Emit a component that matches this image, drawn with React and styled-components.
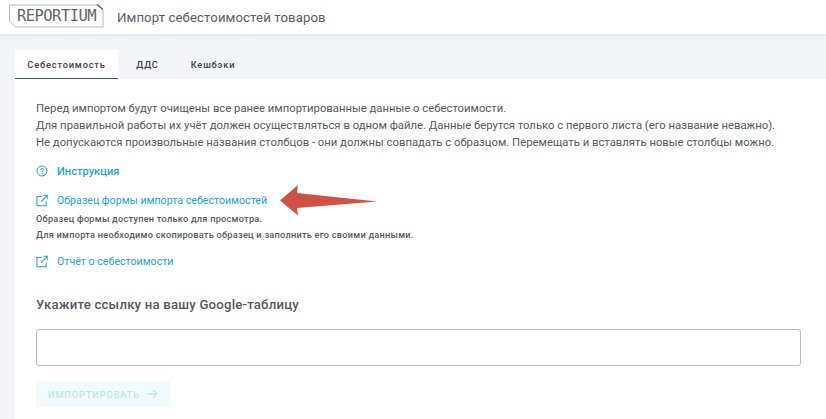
import React from "react";
import styled, { createGlobalStyle } from "styled-components";

const Global = createGlobalStyle`
  html, body { margin: 0; padding: 0; background: #f4f5f9; }
  body { font-family: Roboto, "Liberation Sans", sans-serif; }
  #root { width: 826px; height: 419px; overflow: hidden; }
`;
const Page = styled.div`width: 826px; height: 419px; display: flex; flex-direction: column; overflow: hidden; position: relative;`;
const Header = styled.header`
  height: 34px; flex: none; background: #fff; display: flex; align-items: center; gap: 15px; padding: 0 0 0 9px;
  box-shadow: 0 1px 4px rgba(60,60,80,.12); position: relative; z-index: 1;
`;
const Logo = styled.div`
  position: relative; width: 93px; height: 26px; box-sizing: border-box; display: flex; align-items: center; justify-content: center;
`;
const LogoFrame = styled.svg`position: absolute; left: 0; top: 0; overflow: visible;`;
const LogoText = styled.span`
  font-family: "DejaVu Sans Mono", "Liberation Mono", monospace; font-size: 15.5px; color: #62676c; letter-spacing: -0.55px; position: relative; line-height: 1; top: 0px; left: 1px;
`;
const Title = styled.div`font-size: 13.2px; color: #5a5f66; letter-spacing: .1px;`;
const Body = styled.main`flex: 1; padding: 16px 0 0 15px; display: flex; flex-direction: column;`;
const Tabs = styled.nav`display: flex; height: 29px; flex: none;`;
const Tab = styled.div`
  width: ${p => p.$w}px; box-sizing: border-box; display: flex; align-items: center; justify-content: center;
  font-size: 9.3px; font-weight: 500; letter-spacing: .8px; color: #3d4248;
  background: ${p => p.$active ? "#fff" : "transparent"};
  border-bottom: ${p => p.$active ? "1px solid #33507a" : "none"};
`;
const Card = styled.section`flex: 1; background: #fff; padding: 21px 0 0 21px; position: relative;`;
const Intro = styled.p`margin: 0; font-size: 11.3px; line-height: 17px; color: #555a60; white-space: nowrap;`;
const LinkRow = styled.div`
  display: flex; align-items: center; gap: 9px; height: 16px; margin-top: ${p => p.$mt}px;
  color: #1ba8c9; font-size: ${p => p.$bold ? 11.1 : 10.65}px; font-weight: ${p => p.$bold ? 500 : 400};
`;
const IconBox = styled.span`width: 12px; height: 14px; display: inline-flex; align-items: center; justify-content: center; flex: none;`;
const Note = styled.p`margin: 3px 0 0; font-size: 9.2px; line-height: 16px; font-weight: 500; color: #555a60; letter-spacing: .25px; white-space: nowrap;`;
const Label = styled.h2`margin: 28px 0 0; font-size: 13.2px; line-height: 16px; font-weight: 500; color: #55595f; letter-spacing: .2px;`;
const Input = styled.input`
  display: block; box-sizing: border-box; width: 765px; height: 37px; margin-top: 16px; border: 1px solid #b9bbbf; border-radius: 3px; background: #fff; outline: none;
`;
const Button = styled.button`
  display: flex; align-items: center; justify-content: center; gap: 7px; width: 134px; height: 26px; margin-top: 15px; border: none; padding: 0; border-radius: 2px;
  background: #f1fafc; color: #bce4ef; font-family: inherit; font-size: 9.2px; font-weight: 500; letter-spacing: .9px;
`;
const Arrow = styled.svg`position: absolute; left: 280px; top: 185px; z-index: 2;`;

const External = () => (
  <svg width="13" height="13" viewBox="0 0 13 13" fill="none" stroke="#1ba8c9" strokeWidth="1.1">
    <path d="M6 2.2H1v10h10V7.2" />
    <path d="M5.5 7.7 12 1.2M8 .9h4.2v4.2" />
  </svg>
);
const Help = () => (
  <svg width="12" height="12" viewBox="0 0 12 12" fill="none" stroke="#1ba8c9" strokeWidth="1">
    <circle cx="6" cy="6" r="5" />
    <path d="M4.6 4.8c0-.9.6-1.4 1.4-1.4s1.4.5 1.4 1.3c0 1-1.4 1.1-1.4 2.2" />
    <path d="M6 8.1v.9" />
  </svg>
);

export default function App() {
  return (
    <Page>
      <Global />
      <Header>
        <Logo>
          <LogoFrame width="95" height="26" viewBox="0 0 95 26" fill="none" stroke="#b9bcc0" strokeWidth="1">
            <path d="M88 1H.5V17L6.5 23H94V6" />
            <path d="M88 .5 94 5.5" stroke="#555a60" strokeWidth="1.4" />
          </LogoFrame>
          <LogoText>REPORTIUM</LogoText>
        </Logo>
        <Title>Импорт себестоимостей товаров</Title>
      </Header>
      <Body>
        <Tabs>
          <Tab $w={103} $active>Себестоимость</Tab>
          <Tab $w={59}>ДДС</Tab>
          <Tab $w={72}>Кешбэки</Tab>
        </Tabs>
        <Card>
          <Intro>
            Перед импортом будут очищены все ранее импортированные данные о себестоимости.<br />
            Для правильной работы их учёт должен осуществляться в одном файле. Данные берутся только с первого листа (его название неважно).<br />
            Не допускаются произвольные названия столбцов - они должны совпадать с образцом. Перемещать и вставлять новые столбцы можно.
          </Intro>
          <LinkRow $mt={12} $bold><IconBox><Help /></IconBox>Инструкция</LinkRow>
          <LinkRow $mt={13}><IconBox><External /></IconBox>Образец формы импорта себестоимостей</LinkRow>
          <Note>
            Образец формы доступен только для просмотра.<br />
            Для импорта необходимо скопировать образец и заполнить его своими данными.
          </Note>
          <LinkRow $mt={10}><IconBox><External /></IconBox>Отчёт о себестоимости</LinkRow>
          <Label>Укажите ссылку на вашу Google-таблицу</Label>
          <Input />
          <Button>
            ИМПОРТИРОВАТЬ
            <svg width="11" height="10" viewBox="0 0 11 10" fill="none" stroke="#bce4ef" strokeWidth="1.3"><path d="M.5 5h9.5M6 1l4 4-4 4" /></svg>
          </Button>
        </Card>
      </Body>
      <Arrow width="98" height="31" viewBox="0 0 98 31">
        <path d="M0 15.5 18 0 17 8 97 16.5 17 23 18 30.5Z" fill="#cf5245" />
      </Arrow>
    </Page>
  );
}
